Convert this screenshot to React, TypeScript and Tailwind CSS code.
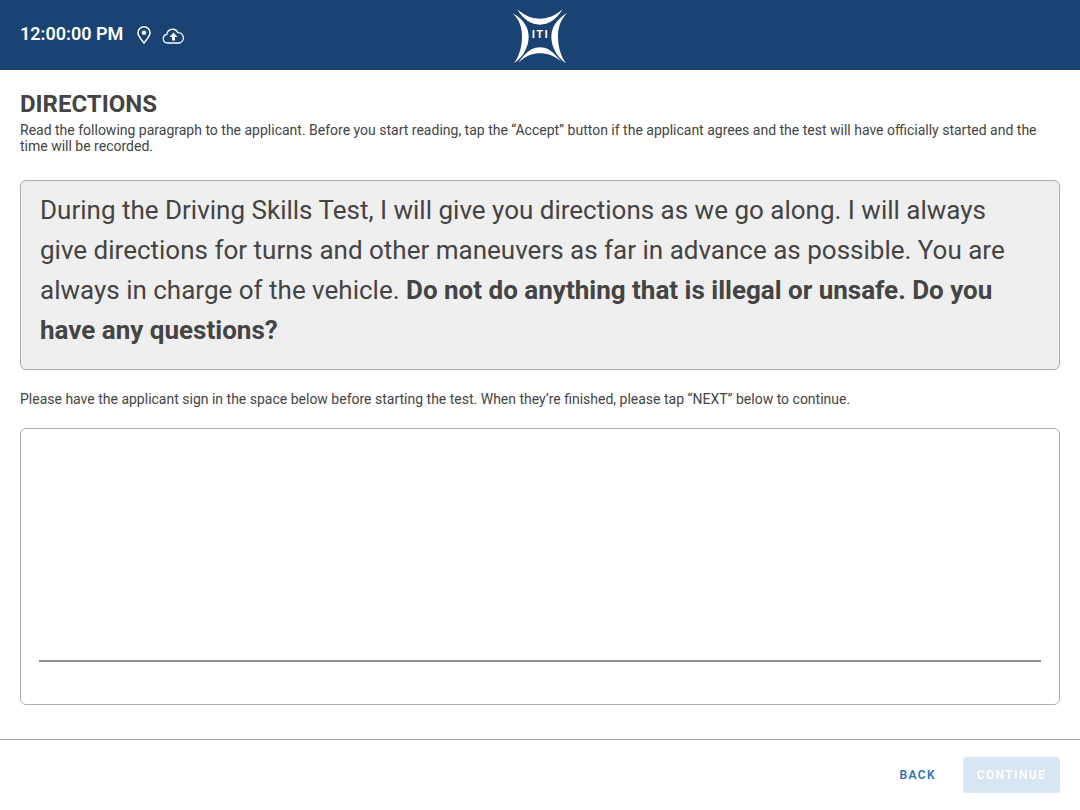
export default function App() {
  return (
    <div className="flex h-[810px] w-[1080px] flex-col bg-white font-['Roboto',sans-serif] text-[#444444]">
      <header className="relative flex h-[70px] items-center bg-[#1a4272] pb-[2px] pl-5 text-white">
        <span className="mb-[1px] text-[18px] font-semibold">12:00:00 PM</span>
        {/* pin */}
        <svg className="ml-[13px] mt-[1px] h-[18px] w-[16px]" viewBox="0 0 16 18" fill="none" stroke="white" strokeWidth="1.500">
          <path d="M8 17C5.500 13.500 2 10.500 2 6.800A6 6 0 0 1 14 6.800C14 10.500 10.500 13.500 8 17Z" />
          <circle cx="8" cy="6.800" r="2.200" fill="white" stroke="none" />
        </svg>
        {/* cloud upload */}
        <svg className="ml-[10px] mt-[3px] h-[16px] w-[23px]" viewBox="0 0 23 16" fill="none" stroke="white" strokeWidth="1.300">
          <path d="M5.500 15a4.400 4.400 0 0 1-.7-8.700A5.800 5.800 0 0 1 15.800 4.600 5.300 5.300 0 0 1 17.500 15Z" />
          <path d="M11.500 4.500 15.500 9H13V12.500H10V9H7.500Z" fill="white" stroke="none" />
        </svg>
        {/* logo */}
        <div className="absolute left-[500px] top-0 h-[70px] w-[80px]">
          <svg className="h-full w-full" viewBox="0 0 240 210" fill="white">
            <path d="M52 28C80 52 100 56 120 56C140 56 162 50 188 28C168 60 145 74 120 74C95 74 70 60 52 28Z" />
            <path d="M38 40C60 62 66 85 66 108C66 135 60 165 42 190C70 170 86 140 86 110C86 82 70 58 38 40Z" />
            <path d="M202 38C180 60 174 85 174 108C174 135 180 165 198 190C170 170 154 140 154 110C154 82 170 58 202 38Z" />
            <path d="M55 188C80 165 100 160 120 160C140 160 165 166 186 188C160 154 142 142 120 142C98 142 78 154 55 188Z" />
          </svg>
          <span className="absolute inset-0 flex items-center justify-center pl-[1px] text-[11px] font-bold tracking-[1.500px]">ITI</span>
        </div>
      </header>
      <main className="flex-1 px-5">
        <h1 className="mt-5 text-[24px] font-bold leading-[28px]">DIRECTIONS</h1>
        <p className="mt-[4px] text-[14px] leading-4">
          Read the following paragraph to the applicant. Before you start reading, tap the “Accept” button if the applicant agrees and the test will have officially started and the time will be recorded.
        </p>
        <div className="mt-[26px] h-[190px] rounded-md border border-[#adadad] bg-[#efefef] pb-2.5 pl-[19px] pr-5 pt-[9px] text-[26px] leading-10">
          During the Driving Skills Test, I will give you directions as we go along. I will always give directions for turns and other maneuvers as far in advance as possible. You are always in charge of the vehicle. <b>Do not do anything that is illegal or unsafe. Do you have any questions?</b>
        </div>
        <p className="mt-[21px] text-[14px] leading-4">
          Please have the applicant sign in the space below before starting the test. When they’re finished, please tap “NEXT” below to continue.
        </p>
        <div className="mt-[21px] flex h-[277px] flex-col justify-end rounded-md border border-[#adadad] px-[18px] pb-[42px]">
          <div className="h-0.5 bg-[#8f8f8f]" />
        </div>
      </main>
      <footer className="flex h-[71px] items-center justify-end gap-[27px] border-t border-[#9e9e9e] px-5">
        <span className="text-xs font-semibold tracking-[1.400px] text-[#2f73b8]">BACK</span>
        <span className="flex h-9 w-[97px] items-center justify-center rounded bg-[#d8e5f2] text-xs font-semibold tracking-[1.400px] text-white">CONTINUE</span>
      </footer>
    </div>
  );
}
